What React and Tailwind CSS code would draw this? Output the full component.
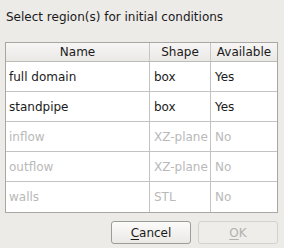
import React from "react";

const rows = [
  { name: "full domain", shape: "box", avail: "Yes", enabled: true },
  { name: "standpipe", shape: "box", avail: "Yes", enabled: true },
  { name: "inflow", shape: "XZ-plane", avail: "No", enabled: false },
  { name: "outflow", shape: "XZ-plane", avail: "No", enabled: false },
  { name: "walls", shape: "STL", avail: "No", enabled: false },
];

const cols = "grid grid-cols-[144px_61px_66px]";

export default function App() {
  return (
    <div
      className="w-[284px] h-[248px] bg-[#edebe8] text-[12px] text-[#1a1a1a] flex flex-col"
      style={{ fontFamily: '"DejaVu Sans", sans-serif' }}
    >
      <div className="pl-[6px] pt-[10px] h-[42px] leading-[15px]">Select region(s) for initial conditions</div>

      <div className="ml-[5px] w-[273px] border border-[#a9a7a3] bg-white">
        <div className={`${cols} h-[19px] bg-gradient-to-b from-[#f7f6f5] to-[#ebe9e6] border-b border-[#bdbbb7]`}>
          <div className="flex items-center justify-center border-r border-[#c8c6c2]">Name</div>
          <div className="flex items-center justify-center border-r border-[#c8c6c2]">Shape</div>
          <div className="flex items-center justify-center">Available</div>
        </div>
        {rows.map((r) => (
          <div
            key={r.name}
            className={`${cols} h-[30px] border-b border-[#c3c3c3] last:border-b-0 ${r.enabled ? "text-[#1a1a1a]" : "text-[#b9b9b9]"}`}
          >
            <div className="flex items-center pl-[3px] border-r border-[#c3c3c3]">{r.name}</div>
            <div className="flex items-center pl-[4px] border-r border-[#c3c3c3]">{r.shape}</div>
            <div className="flex items-center pl-[4px]">{r.avail}</div>
          </div>
        ))}
      </div>

      <div className="flex justify-end gap-[7px] pr-[6px] mt-[8px]">
        <button className="w-[80px] h-[23px] rounded-[3px] border border-[#9e9c98] bg-gradient-to-b from-[#fbfbfa] to-[#ebe9e6] text-[#1a1a1a]">
          <span className="underline underline-offset-2">C</span>ancel
        </button>
        <button className="w-[80px] h-[23px] rounded-[3px] border border-[#d3d1cd] bg-[#efedea] text-[#b3b1ad]">
          <span className="underline underline-offset-2">O</span>K
        </button>
      </div>
    </div>
  );
}
